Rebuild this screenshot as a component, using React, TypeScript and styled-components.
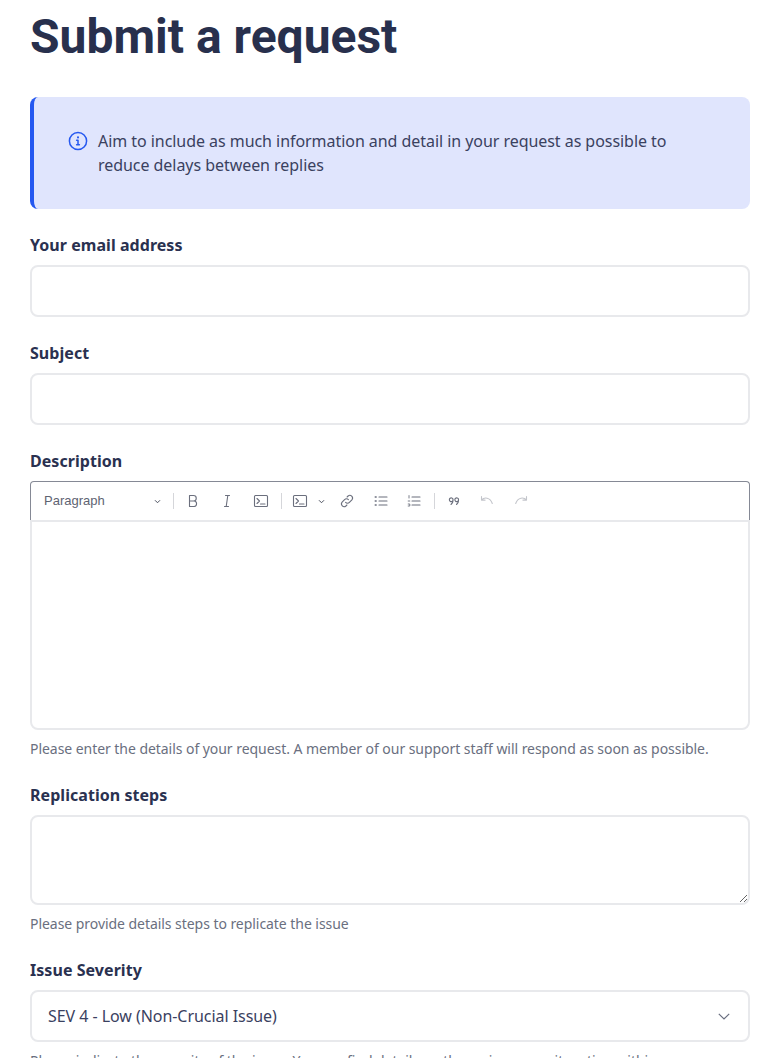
import React from "react";
import styled, { createGlobalStyle } from "styled-components";

const Global = createGlobalStyle`
  html, body { margin: 0; padding: 0; height: 1058px; overflow: hidden; background: #fff; }
  body { font-family: "Noto Sans", sans-serif; color: #2a3150; letter-spacing: -0.05px; }
  * { box-sizing: border-box; }
`;

const Page = styled.main`
  width: 767px;
  padding: 8px 17px 0 30px;
`;

const Title = styled.h1`
  margin: 0 0 32px;
  font-family: "Roboto", sans-serif;
  font-size: 48px;
  line-height: 57px;
  font-weight: 700;
  letter-spacing: 0;
  color: #28304d;
`;

const Callout = styled.div`
  display: flex;
  gap: 10px;
  height: 112px;
  padding: 32px 32px 0 34px;
  margin-bottom: 24px;
  background: #e0e5fd;
  border-left: 4px solid #2558f0;
  border-radius: 8px;
  font-size: 16px;
  line-height: 24px;
  color: #3a4160;
`;

const InfoIcon = styled.svg`
  flex: none;
  width: 20px;
  height: 20px;
  margin-top: 2px;
  fill: none;
  stroke: #2558f0;
  stroke-width: 1.5;
  stroke-linecap: round;
`;

const Field = styled.div`
  margin-bottom: 24px;
`;

const Label = styled.label`
  display: block;
  margin-bottom: 8px;
  font-size: 16px;
  line-height: 24px;
  font-weight: 700;
  letter-spacing: 0.05px;
  color: #2a3150;
`;

const Input = styled.input`
  display: block;
  width: 100%;
  height: 52px;
  border: 2px solid #e8e9ec;
  border-radius: 8px;
  background: #fff;
  outline: none;
`;

const Toolbar = styled.div`
  display: flex;
  align-items: center;
  height: 39px;
  padding-left: 13px;
  border: 1px solid #858995;
  border-bottom: none;
  border-radius: 4px 4px 0 0;
  color: #6b6f7d;
`;

const BlockSelect = styled.div`
  display: flex;
  align-items: center;
  justify-content: space-between;
  width: 125px;
  padding: 0 8px 2px 0;
  margin-right: 4px;
  font-family: "Liberation Sans", sans-serif;
  font-size: 13px;
  letter-spacing: 0;
  color: #5e6372;
`;

const Sep = styled.span<{ $l?: number; $r?: number }>`
  width: 1px;
  height: 16px;
  background: #d5d6da;
  margin: 0 ${(p) => p.$r ?? 0}px 0 ${(p) => p.$l ?? 0}px;
`;

const Tool = styled.span<{ $w?: number; $faded?: boolean }>`
  display: flex;
  align-items: center;
  justify-content: center;
  width: ${(p) => p.$w ?? 34}px;
  height: 20px;
  color: ${(p) => (p.$faded ? "#c3c5cb" : "#6b6f7d")};
  svg {
    display: block;
    width: 16px;
    height: 16px;
    fill: none;
    stroke: currentColor;
    stroke-width: 1.1;
    stroke-linecap: round;
    stroke-linejoin: round;
  }
`;

const Caret = styled.svg`
  display: block;
  flex: none;
  width: 7px;
  height: 5px;
  margin-top: 2px;
  fill: none;
  stroke: #4a4f5e;
  stroke-width: 1.2;
`;

const SplitCaret = styled.span`
  display: flex;
  margin: -2px 0 0 3px;
`;

const Editor = styled.div`
  height: 210px;
  border: 2px solid #e8e9ec;
  border-radius: 0 0 8px 8px;
`;

const Hint = styled.p`
  margin: 9px 0 0;
  font-size: 14px;
  line-height: 20px;
  color: #6a6f80;
`;

const TextArea = styled.textarea`
  display: block;
  width: 100%;
  height: 90px;
  border: 2px solid #e8e9ec;
  border-radius: 8px;
  outline: none;
`;

const SelectBox = styled.div`
  display: flex;
  align-items: center;
  justify-content: space-between;
  height: 52px;
  padding: 0 18px 0 16px;
  border: 2px solid #e8e9ec;
  border-radius: 8px;
  font-size: 16px;
  color: #3a4160;
`;

const Chevron = styled.svg`
  width: 12px;
  height: 7px;
  fill: none;
  stroke: #6a6f80;
  stroke-width: 1.2;
`;

const Term = () => (
  <svg viewBox="0 0 16 16">
    <rect x="1.5" y="2.5" width="13" height="11" rx="1" />
    <path d="M4 5.5 6.5 8 4 10.5M7.5 11H12" />
  </svg>
);

const CaretIcon = () => (
  <Caret viewBox="0 0 8 6"><path d="M1 1.5 4 4.5 7 1.5" /></Caret>
);

export default function App() {
  return (
    <Page>
      <Global />
      <Title>Submit a request</Title>
      <Callout>
        <InfoIcon viewBox="0 0 20 20">
          <circle cx="10" cy="10" r="8.6" />
          <path d="M10 9.2v4.6M8.6 9.2H10M8.6 13.8h2.8" />
          <path d="M10 6.2v.2" strokeWidth="2" />
        </InfoIcon>
        <span>Aim to include as much information and detail in your request as possible to reduce delays between replies</span>
      </Callout>
      <Field>
        <Label>Your email address</Label>
        <Input type="text" />
      </Field>
      <Field>
        <Label>Subject</Label>
        <Input type="text" />
      </Field>
      <Field>
        <Label>Description</Label>
        <Toolbar>
          <BlockSelect>Paragraph<CaretIcon /></BlockSelect>
          <Sep $r={2} />
          <Tool>
            <svg viewBox="0 0 16 16"><path d="M4.5 2.500v11M4.500 2.500h4a2.700 2.700 0 0 1 0 5.500h-4M4.500 8h4.800a2.800 2.800 0 0 1 0 5.500H4.500" /></svg>
          </Tool>
          <Tool>
            <svg viewBox="0 0 16 16"><path d="M6.500 2.500h4M5.500 13.500h4M8.800 2.500 7.200 13.500" /></svg>
          </Tool>
          <Tool>
            <Term />
          </Tool>
          <Sep $l={3} $r={3} />
          <Tool $w={30}>
            <Term />
          </Tool>
          <SplitCaret><CaretIcon /></SplitCaret>
          <Tool $w={44}>
            <svg viewBox="0 0 16 16"><path d="M6.600 9.400a2.600 2.600 0 0 0 3.800 0l2.500-2.600a2.700 2.700 0 0 0-3.800-3.800l-1 1M9.400 6.600a2.600 2.600 0 0 0-3.800 0L3.100 9.200a2.700 2.700 0 0 0 3.800 3.800l1-1" /></svg>
          </Tool>
          <Tool $w={24}>
            <svg viewBox="0 0 16 16"><path d="M6 4h8M6 8h8M6 12h8" /><path d="M2.300 4h.8M2.300 8h.8M2.300 12h.8" strokeWidth="1.600" /></svg>
          </Tool>
          <Tool $w={41}>
            <svg viewBox="0 0 16 16"><path d="M6 4h8M6 8h8M6 12h8" /><path d="M3 2.600v2.400M2.200 8h1.600M2.200 11h1.600v2H2.200" strokeWidth=".9" /></svg>
          </Tool>
          <Sep $r={1} />
          <Tool $w={36}>
            <svg viewBox="0 0 16 16"><path d="M7 7.500a1.900 1.900 0 1 1 0-1.500c.2 2.200-.4 4.200-2 5.500M12.500 7.500a1.900 1.900 0 1 1 0-1.500c.2 2.200-.4 4.200-2 5.500" /></svg>
          </Tool>
          <Tool $w={30} $faded>
            <svg viewBox="0 0 16 16"><path d="M2.500 3.500v3.600h3.600M2.500 7c2.800-3 8.500-3 10.800 3.500" /></svg>
          </Tool>
          <Tool $w={38} $faded>
            <svg viewBox="0 0 16 16"><path d="M13.500 3.500v3.600H9.900M13.500 7c-2.800-3-8.500-3-10.800 3.500" /></svg>
          </Tool>
        </Toolbar>
        <Editor />
        <Hint>Please enter the details of your request. A member of our support staff will respond as soon as possible.</Hint>
      </Field>
      <Field>
        <Label>Replication steps</Label>
        <TextArea />
        <Hint>Please provide details steps to replicate the issue</Hint>
      </Field>
      <Field>
        <Label>Issue Severity</Label>
        <SelectBox>
          SEV 4 - Low (Non-Crucial Issue)
          <Chevron viewBox="0 0 12 7"><path d="M.8.8 6 6 11.200.8" /></Chevron>
        </SelectBox>
        <Hint>Please indicate the severity of the issue. You can find details on the various severity rating within</Hint>
      </Field>
    </Page>
  );
}
